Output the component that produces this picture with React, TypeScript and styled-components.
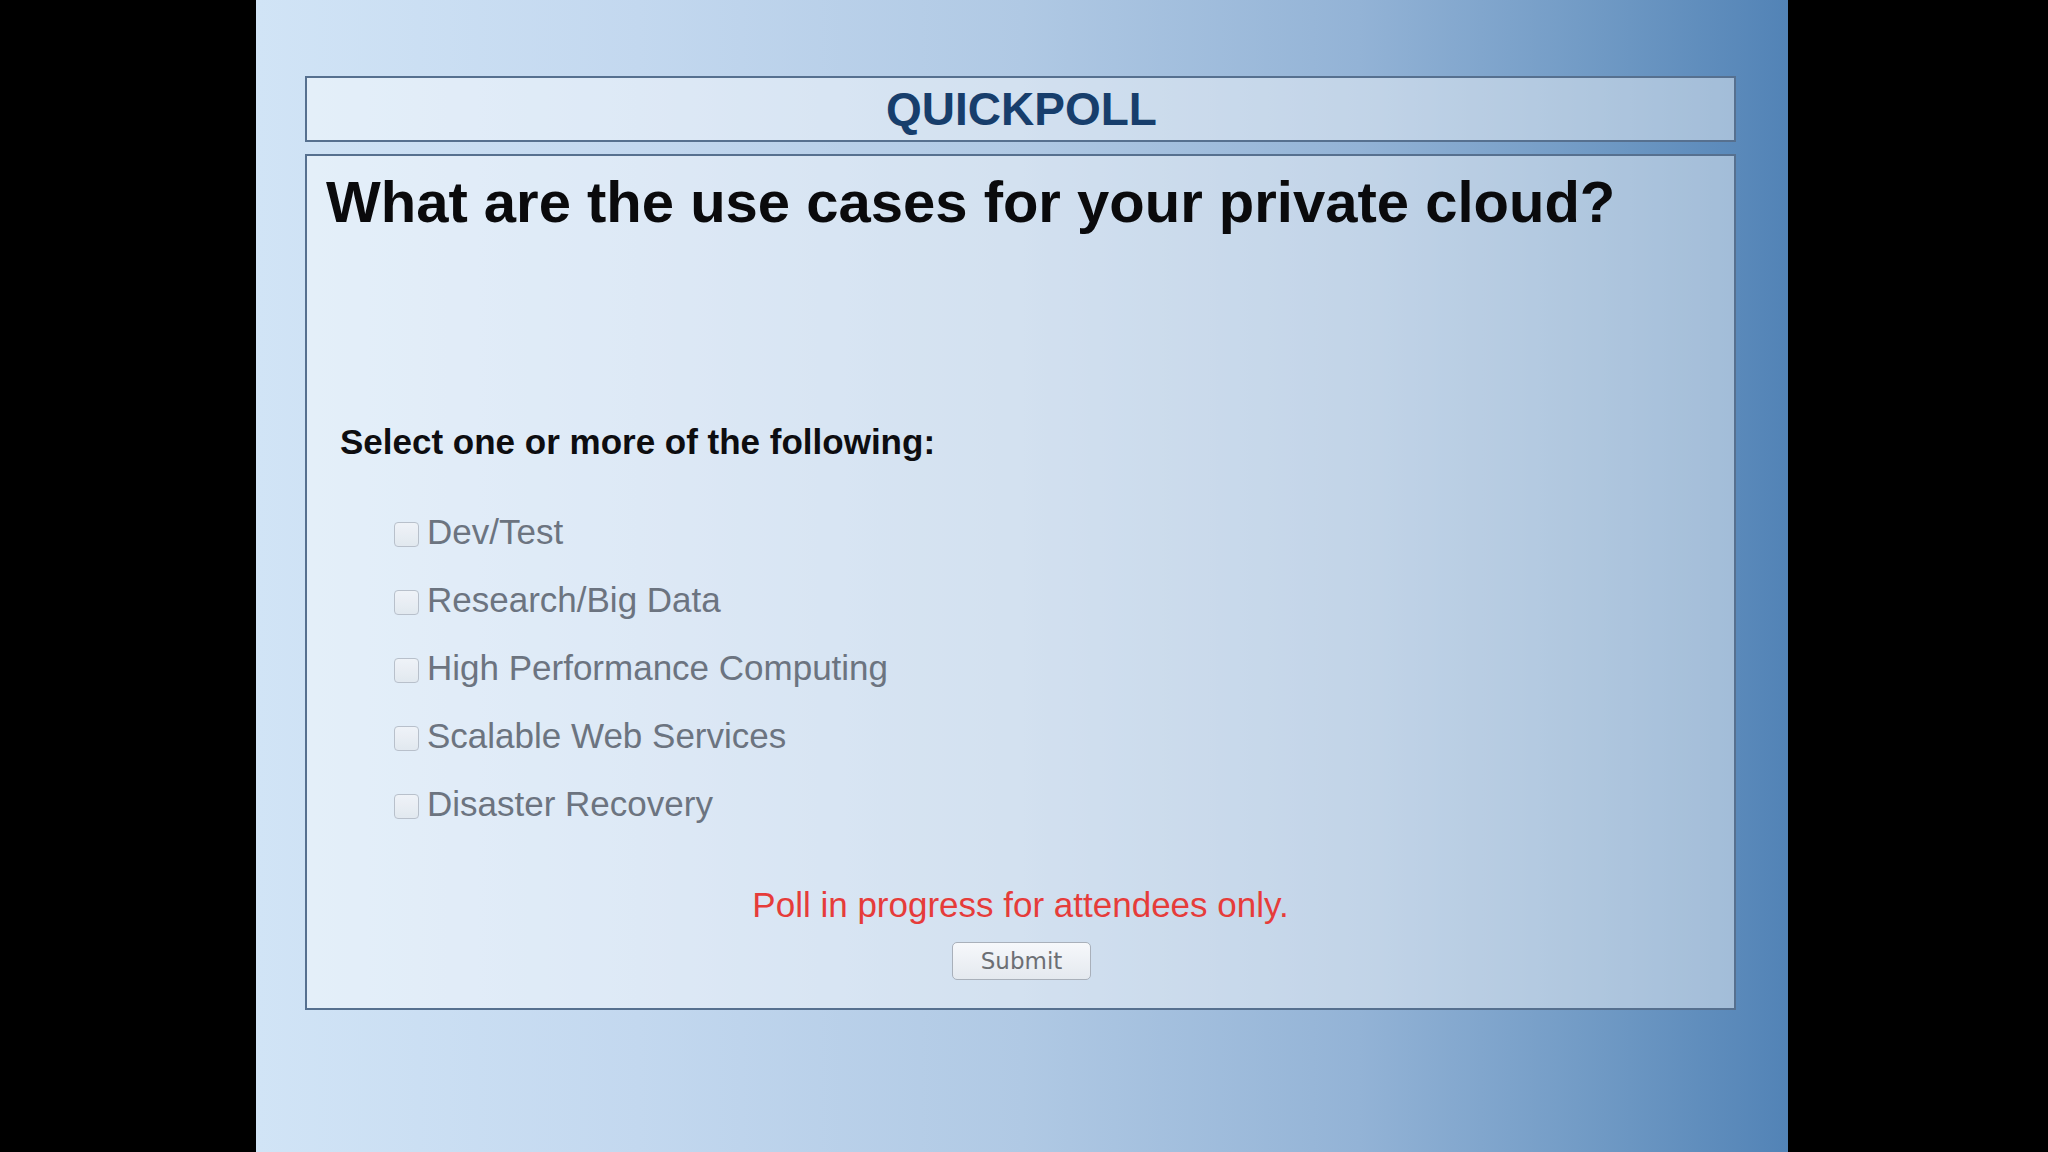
import styled, { createGlobalStyle } from 'styled-components';

const GlobalStyle = createGlobalStyle`
  html, body {
    margin: 0;
    padding: 0;
    background: #000;
  }
  * {
    box-sizing: border-box;
  }
`;

const options = [
  'Dev/Test',
  'Research/Big Data',
  'High Performance Computing',
  'Scalable Web Services',
  'Disaster Recovery',
];

const App = () => {
  return (
    <>
      <GlobalStyle />
      <Stage>
        <Slide>
          <Header>
            <Title>QUICKPOLL</Title>
          </Header>
          <Panel>
            <Question>What are the use cases for your private cloud?</Question>
            <Prompt>Select one or more of the following:</Prompt>
            <OptionList>
              {options.map((label) => (
                <OptionRow key={label}>
                  <Box type="checkbox" disabled />
                  <OptionLabel>{label}</OptionLabel>
                </OptionRow>
              ))}
            </OptionList>
            <Notice>Poll in progress for attendees only.</Notice>
            <SubmitButton disabled>Submit</SubmitButton>
          </Panel>
        </Slide>
      </Stage>
    </>
  );
};

const Stage = styled.div`
  width: 2048px;
  height: 1152px;
  background: #000;
  padding-left: 256px;
  overflow: hidden;
`;

const Slide = styled.div`
  width: 1532px;
  height: 1152px;
  padding: 76px 52px 0 49px;
  display: flex;
  flex-direction: column;
  gap: 12px;
  background: linear-gradient(
    90deg,
    #d1e4f6 0%,
    #c3d8ef 25%,
    #b0c9e4 50%,
    #93b3d6 72%,
    #6f99c4 88%,
    #5283b6 100%
  );
  font-family: 'Liberation Sans', Arial, Helvetica, sans-serif;
`;

const Header = styled.div`
  height: 66px;
  border: 2px solid #56708f;
  background: rgba(255, 255, 255, 0.44);
  display: flex;
  align-items: center;
  justify-content: center;
`;

const Title = styled.div`
  font-size: 46px;
  font-weight: 700;
  color: #173e6c;
  line-height: 1;
  margin-left: 2px;
`;

const Panel = styled.div`
  height: 856px;
  border: 2px solid #56708f;
  background: rgba(255, 255, 255, 0.44);
  padding: 13px 19px 0;
  display: flex;
  flex-direction: column;
`;

const Question = styled.h1`
  margin: 0;
  font-size: 58px;
  line-height: 66px;
  font-weight: 700;
  color: #0a0a0c;
`;

const Prompt = styled.div`
  margin: 187px 0 0 14px;
  font-size: 35px;
  line-height: 40px;
  font-weight: 700;
  color: #0d0d10;
`;

const OptionList = styled.div`
  margin: 36px 0 0 68px;
  display: flex;
  flex-direction: column;
`;

const OptionRow = styled.label`
  height: 68px;
  display: flex;
  align-items: center;
  gap: 8px;
`;

const Box = styled.input`
  appearance: none;
  margin: 4px 0 0 0;
  width: 25px;
  height: 25px;
  border: 1.5px solid #b4bcc7;
  border-radius: 4px;
  background: linear-gradient(180deg, #f1f4f8 0%, #e2e8ef 100%);
  opacity: 0.9;
`;

const OptionLabel = styled.span`
  font-size: 35px;
  line-height: 40px;
  color: #6c7480;
`;

const Notice = styled.div`
  margin-top: 47px;
  text-align: center;
  font-size: 35px;
  line-height: 40px;
  color: #e63c3a;
`;

const SubmitButton = styled.button`
  align-self: center;
  margin: 17px 0 0 2px;
  width: 139px;
  height: 38px;
  border: 1.5px solid #a9b0ba;
  border-radius: 5px;
  background: linear-gradient(180deg, #f6f8fb 0%, #e4e9ef 100%);
  font-family: 'DejaVu Sans', Verdana, sans-serif;
  font-size: 23px;
  line-height: 1;
  color: #6c6f74;
  padding: 0;
`;

export default App;
